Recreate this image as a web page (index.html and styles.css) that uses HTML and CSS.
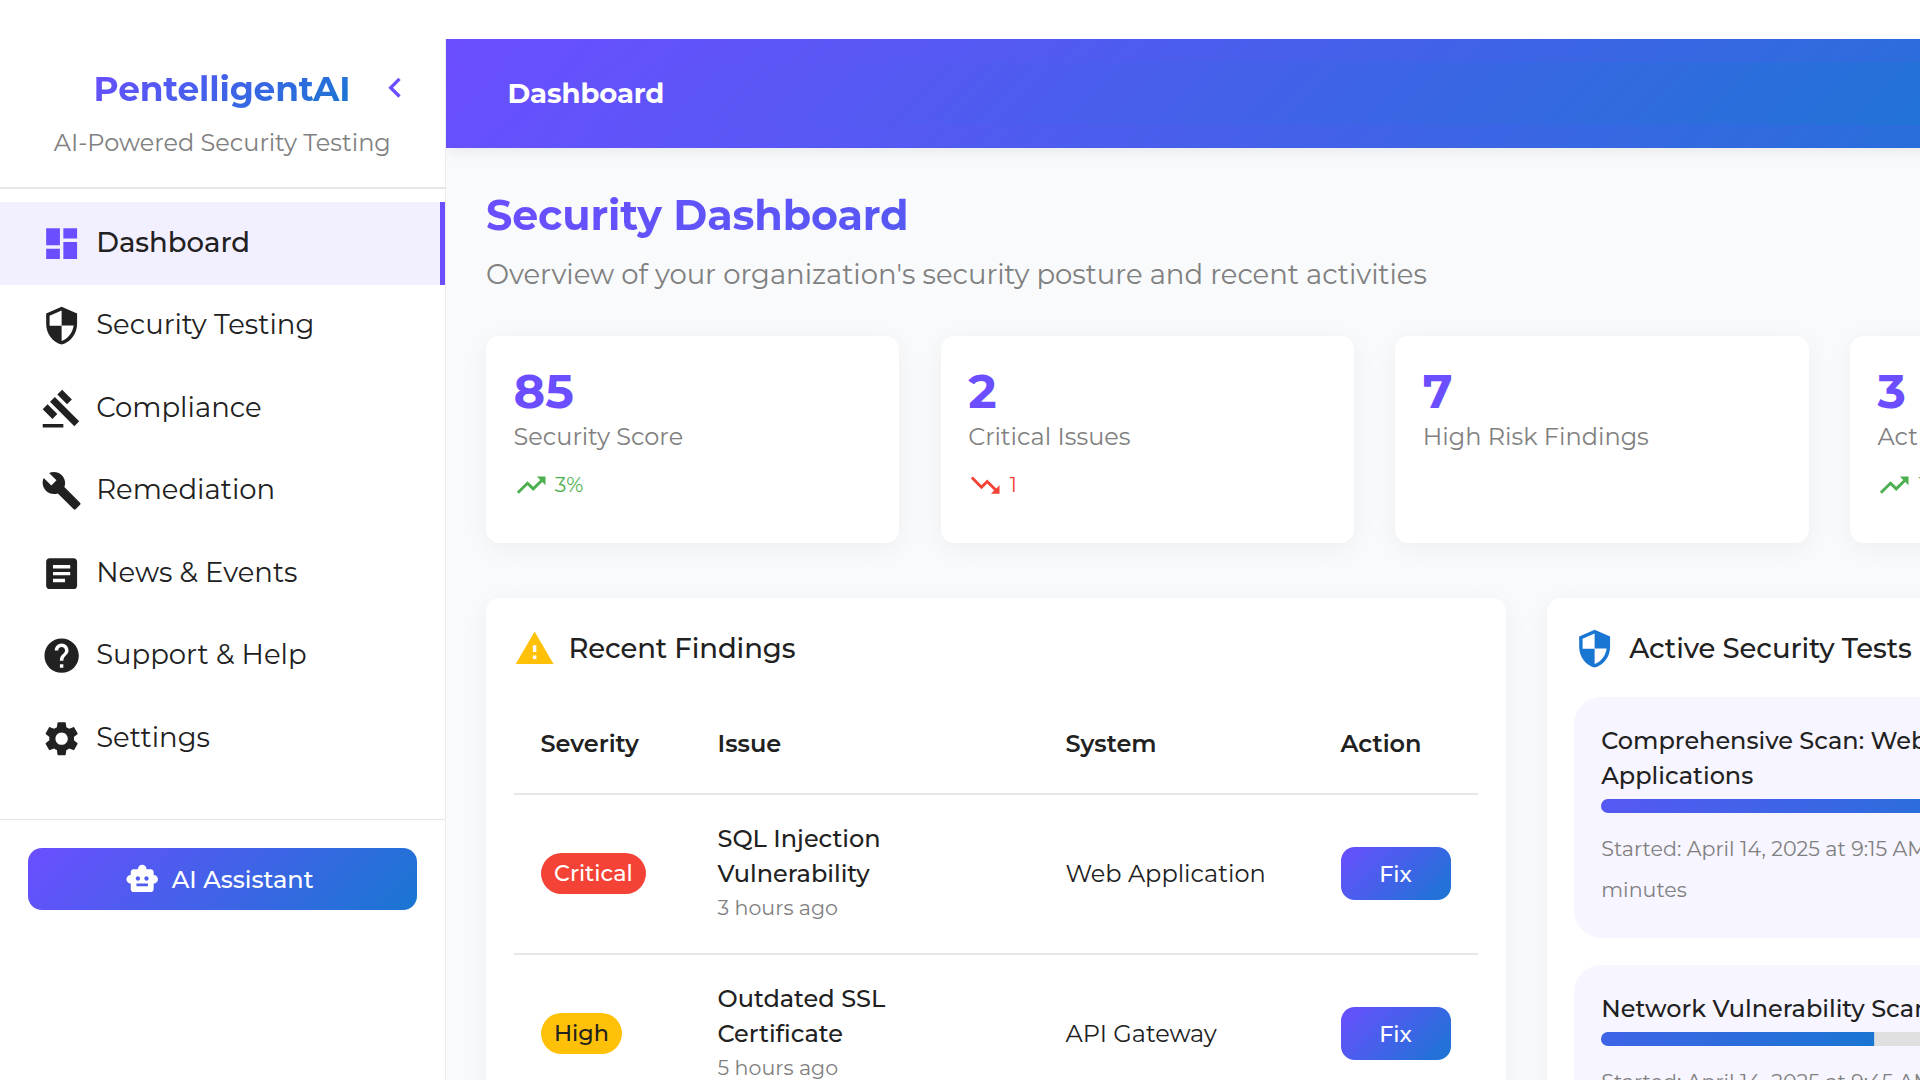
FILE: index.html
```html
<!DOCTYPE html>
<html lang="en">
<head>
<meta charset="utf-8">
<title>PentelligentAI - Security Dashboard</title>
<link rel="stylesheet" href="styles.css">
</head>
<body>
<svg class="sprite" aria-hidden="true">
  <symbol id="i-dashboard" viewBox="0 0 24 24"><path d="M3 13h8V3H3v10zm0 8h8v-6H3v6zm10 0h8V11h-8v10zm0-18v6h8V3h-8z"/></symbol>
  <symbol id="i-shield" viewBox="0 0 24 24"><path d="M12 1 3 5v6c0 5.55 3.84 10.74 9 12 5.16-1.26 9-6.45 9-12V5l-9-4zm0 10.99h7c-.53 4.12-3.28 7.79-7 8.94V12H5V6.3l7-3.11v8.8z"/></symbol>
  <symbol id="i-gavel" viewBox="0 0 24 24"><path d="M1 21h12v2H1v-2zM5.245 8.07l2.83-2.827 14.14 14.142-2.828 2.828L5.245 8.07zM12.317 1l5.657 5.656-2.83 2.83-5.654-5.66L12.317 1zM3.825 9.485l5.657 5.657-2.828 2.828-5.657-5.657 2.828-2.828z"/></symbol>
  <symbol id="i-build" viewBox="0 0 24 24"><path d="m22.7 19-9.1-9.1c.9-2.3.4-5-1.5-6.900-2-2-5-2.400-7.400-1.300L9 6 6 9 1.600 4.700C.4 7.100.9 10.100 2.900 12.100c1.900 1.900 4.600 2.400 6.900 1.500l9.100 9.100c.4.4 1 .4 1.400 0l2.300-2.300c.5-.4.5-1.100.1-1.400z"/></symbol>
  <symbol id="i-article" viewBox="0 0 24 24"><path d="M19 3H5c-1.100 0-2 .9-2 2v14c0 1.100.9 2 2 2h14c1.100 0 2-.9 2-2V5c0-1.100-.9-2-2-2zm-5 14H7v-2h7v2zm3-4H7v-2h10v2zm0-4H7V7h10v2z"/></symbol>
  <symbol id="i-help" viewBox="0 0 24 24"><path d="M12 2C6.480 2 2 6.480 2 12s4.480 10 10 10 10-4.480 10-10S17.520 2 12 2zm1 17h-2v-2h2v2zm2.070-7.750-.9.920C13.450 12.900 13 13.500 13 15h-2v-.5c0-1.100.450-2.100 1.170-2.830l1.240-1.260c.370-.360.590-.860.590-1.410 0-1.100-.9-2-2-2s-2 .9-2 2H8c0-2.210 1.790-4 4-4s4 1.790 4 4c0 .880-.360 1.680-.930 2.250z"/></symbol>
  <symbol id="i-settings" viewBox="0 0 24 24"><path d="M19.140 12.940c.040-.3.060-.610.060-.940 0-.320-.020-.640-.070-.940l2.030-1.580c.180-.140.230-.410.120-.610l-1.920-3.320c-.120-.220-.370-.290-.590-.220l-2.390.960c-.5-.380-1.030-.7-1.620-.940l-.360-2.540c-.040-.240-.240-.410-.480-.410h-3.840c-.240 0-.430.170-.470.410l-.360 2.540c-.590.240-1.130.570-1.620.940l-2.390-.960c-.220-.080-.470 0-.590.220L2.740 8.870c-.120.210-.080.470.120.610l2.030 1.580c-.050.3-.090.630-.090.940s.020.640.070.940l-2.030 1.580c-.180.140-.230.410-.120.610l1.920 3.320c.120.220.370.290.590.220l2.390-.960c.5.380 1.030.7 1.620.940l.360 2.540c.050.240.240.410.480.410h3.840c.240 0 .440-.170.470-.410l.360-2.540c.590-.240 1.130-.560 1.620-.940l2.390.960c.220.080.470 0 .590-.220l1.920-3.320c.120-.220.070-.470-.120-.610l-2.010-1.580zM12 15.600c-1.980 0-3.600-1.620-3.600-3.600s1.620-3.600 3.600-3.600 3.600 1.620 3.600 3.600-1.620 3.600-3.600 3.600z"/></symbol>
  <symbol id="i-bot" viewBox="0 0 24 24"><path d="M20 9V7c0-1.100-.9-2-2-2h-3c0-1.660-1.340-3-3-3S9 3.340 9 5H6c-1.100 0-2 .9-2 2v2c-1.660 0-3 1.340-3 3s1.340 3 3 3v4c0 1.100.9 2 2 2h12c1.100 0 2-.9 2-2v-4c1.660 0 3-1.340 3-3s-1.340-3-3-3zM7.500 11.500c0-.830.670-1.500 1.500-1.500s1.500.670 1.500 1.500S9.830 13 9 13s-1.500-.670-1.500-1.500zM16 17H8v-2h8v2zm-1-4c-.830 0-1.500-.670-1.500-1.500S14.170 10 15 10s1.500.670 1.500 1.500S15.830 13 15 13z"/></symbol>
  <symbol id="i-chevron" viewBox="0 0 24 24"><path d="M15.410 7.410 14 6l-6 6 6 6 1.410-1.410L10.830 12z"/></symbol>
  <symbol id="i-up" viewBox="0 0 24 24"><path d="m16 6 2.290 2.290-4.880 4.880-4-4L2 16.590 3.410 18l6-6 4 4 6.300-6.290L22 12V6z"/></symbol>
  <symbol id="i-down" viewBox="0 0 24 24"><path d="m16 18 2.290-2.290-4.880-4.880-4 4L2 7.410 3.410 6l6 6 4-4 6.300 6.290L22 12v6z"/></symbol>
  <symbol id="i-warning" viewBox="0 0 24 24"><path d="M1 21h22L12 2 1 21zm12-3h-2v-2h2v2zm0-4h-2v-4h2v4z"/></symbol>
</svg>

<div class="app">
  <aside class="sidebar">
    <div class="brand">
      <div class="brand-row">
        <div class="logo">PentelligentAI</div>
        <svg class="icon collapse"><use href="#i-chevron"/></svg>
      </div>
      <div class="tagline">AI-Powered Security Testing</div>
    </div>
    <nav class="nav">
      <a class="nav-item active"><svg class="icon"><use href="#i-dashboard"/></svg>Dashboard</a>
      <a class="nav-item"><svg class="icon"><use href="#i-shield"/></svg>Security Testing</a>
      <a class="nav-item"><svg class="icon"><use href="#i-gavel"/></svg>Compliance</a>
      <a class="nav-item"><svg class="icon"><use href="#i-build"/></svg>Remediation</a>
      <a class="nav-item"><svg class="icon"><use href="#i-article"/></svg>News &amp; Events</a>
      <a class="nav-item"><svg class="icon"><use href="#i-help"/></svg>Support &amp; Help</a>
      <a class="nav-item"><svg class="icon"><use href="#i-settings"/></svg>Settings</a>
    </nav>
    <div class="assistant">
      <button class="assistant-btn"><svg class="icon small"><use href="#i-bot"/></svg>AI Assistant</button>
    </div>
  </aside>

  <div class="viewport">
    <div class="main">
      <header class="topbar"><div class="toolbar">Dashboard</div></header>
      <main class="content">
        <h1 class="title">Security Dashboard</h1>
        <p class="subtitle">Overview of your organization's security posture and recent activities</p>

        <section class="stats">
          <div class="card stat">
            <div class="value">85</div>
            <div class="label">Security Score</div>
            <div class="trend good"><svg class="icon small"><use href="#i-up"/></svg>3%</div>
          </div>
          <div class="card stat">
            <div class="value">2</div>
            <div class="label">Critical Issues</div>
            <div class="trend bad"><svg class="icon small"><use href="#i-down"/></svg>1</div>
          </div>
          <div class="card stat">
            <div class="value">7</div>
            <div class="label">High Risk Findings</div>
          </div>
          <div class="card stat">
            <div class="value">3</div>
            <div class="label">Active Tests</div>
            <div class="trend good"><svg class="icon small"><use href="#i-up"/></svg>1</div>
          </div>
        </section>

        <section class="panels">
          <div class="card panel">
            <h2 class="panel-title"><svg class="icon warn"><use href="#i-warning"/></svg>Recent Findings</h2>
            <table class="findings">
              <thead>
                <tr><th class="c-sev">Severity</th><th class="c-issue">Issue</th><th class="c-sys">System</th><th>Action</th></tr>
              </thead>
              <tbody>
                <tr>
                  <td><span class="badge critical">Critical</span></td>
                  <td><div class="issue">SQL Injection<br>Vulnerability</div><div class="when">3 hours ago</div></td>
                  <td>Web Application</td>
                  <td><button class="fix">Fix</button></td>
                </tr>
                <tr>
                  <td><span class="badge high">High</span></td>
                  <td><div class="issue">Outdated SSL<br>Certificate</div><div class="when">5 hours ago</div></td>
                  <td>API Gateway</td>
                  <td><button class="fix">Fix</button></td>
                </tr>
              </tbody>
            </table>
          </div>

          <div class="card panel">
            <h2 class="panel-title tests-title"><svg class="icon info"><use href="#i-shield"/></svg>Active Security Tests</h2>
            <div class="test">
              <div class="test-name">Comprehensive Scan: Web<br>Applications</div>
              <div class="bar"><div class="fill" style="transform: translateX(-25%)"></div></div>
              <div class="meta">Started: April 14, 2025 at 9:15 AM<br>minutes</div>
            </div>
            <div class="test">
              <div class="test-name">Network Vulnerability Scan</div>
              <div class="bar"><div class="fill" style="transform: translateX(-55%)"></div></div>
              <div class="meta">Started: April 14, 2025 at 9:45 AM</div>
            </div>
          </div>
        </section>
      </main>
    </div>
  </div>
</div>
</body>
</html>
```
FILE: styles.css
```css
:root {
  --primary: #6b4eff;
  --blue: #1976d2;
  --gradient: linear-gradient(135deg, var(--primary) 0%, var(--blue) 100%);
  --text: #212121;
  --muted: #808080;
  --line: #e6e6e6;
}

* { box-sizing: border-box; }

body {
  margin: 0;
  height: 1080px;
  overflow: hidden;
  background: #fff;
  color: var(--text);
  font-family: Montserrat, Inter, sans-serif;
  font-size: 27.5px;
}

h1, h2, p { margin: 0; }
button { border: 0; font-family: inherit; color: #fff; background: var(--gradient); }

.sprite { display: none; }
.icon { width: 41.25px; height: 41.25px; fill: currentColor; flex: none; }
.icon.small { width: 34.4px; height: 34.4px; }

.app { display: flex; height: 1080px; padding-top: 39px; }

/* Sidebar */
.sidebar { width: 445.5px; flex: none; border-right: 1.5px solid #ebecee; }
.brand { height: 150px; padding-top: 27px; border-bottom: 2px solid var(--line); }
.brand-row { display: flex; align-items: center; height: 44px; padding-left: 93.5px; }
.logo {
  padding-top: 2px;
  font-size: 34.4px;
  line-height: 44px;
  font-weight: 700;
  background: var(--gradient);
  -webkit-background-clip: text;
  background-clip: text;
  color: transparent;
  letter-spacing: -0.15px;
}
.collapse { color: var(--primary); margin-left: 25px; width: 40px; }
.tagline { margin-top: 16px; font-size: 24px; line-height: 34px; text-align: center; color: var(--muted); }

.nav { padding-top: 13px; height: 631px; border-bottom: 1.5px solid var(--line); }
.nav-item { display: flex; align-items: center; gap: 13.7px; height: 82.5px; padding: 0 0 3px 41.25px; }
.nav-item .icon { margin-top: 3px; }
.nav-item.active { background: #f2efff; border-right: 5px solid var(--primary); font-weight: 500; }
.nav-item.active .icon { color: var(--primary); }

.assistant { padding: 28px; }
.assistant-btn {
  display: flex;
  align-items: center;
  justify-content: center;
  gap: 12.5px;
  width: 100%;
  height: 62px;
  padding: 0 6px 0 0;
  border-radius: 14px;
  font-size: 24px;
  font-weight: 500;
}

/* Main column, wider than the window */
.viewport { flex: 1; min-width: 0; overflow: hidden; background: #f9fafc; }
.main { width: 1860px; }
.topbar { padding: 23px 0; background: var(--gradient); box-shadow: 0 3px 14px rgba(0, 0, 0, .08); }
.toolbar {
  width: 1640px;
  height: 63px;
  padding-left: 62px;
  color: #fff;
  font-weight: 700;
  line-height: 63px;
  letter-spacing: -0.1px;
  background: var(--gradient);
}

.content { padding: 42px 41px 41px 40.5px; }
.title {
  font-size: 41.25px;
  line-height: 50px;
  font-weight: 700;
  background: var(--gradient);
  -webkit-background-clip: text;
  background-clip: text;
  color: transparent;
  letter-spacing: -0.13px;
}
.subtitle { margin-top: 12px; line-height: 44px; color: var(--muted); letter-spacing: -0.035px; }

.card { background: #fff; border-radius: 13.75px; box-shadow: 0 5px 27px rgba(0, 0, 0, .05); }

.stats { display: grid; grid-template-columns: repeat(4, 413.4px); gap: 41.25px; margin-top: 40px; }
.stat { height: 207px; padding: 26px 27.5px; }
.value { font-size: 48px; line-height: 58px; font-weight: 700; color: var(--primary); }
.label { font-size: 24px; line-height: 34px; color: var(--muted); }
.trend { display: flex; align-items: center; gap: 6.9px; margin-top: 13.5px; font-size: 20.6px; }
.good { color: #4caf50; }
.bad { color: #f44336; }

.panels { display: grid; grid-template-columns: 1019.5px 716px; gap: 41.25px; margin-top: 55px; }
.panel { height: 560px; padding: 27.5px; }
.panel-title { display: flex; align-items: center; gap: 13.7px; height: 47px; padding-bottom: 3px; font-size: 27.5px; font-weight: 500; letter-spacing: -0.1px; }
.panel-title .icon { margin-top: 2.5px; }
.warn { color: #ffc107; }
.info { color: var(--blue); }

.findings { width: 964.5px; margin-top: 21px; border-collapse: collapse; table-layout: fixed; font-size: 24px; }
.findings th { height: 100px; padding: 1px 27px 0; text-align: left; font-weight: 600; border-bottom: 2px solid var(--line); }
.findings td { height: 160px; padding: 0 27px; border-bottom: 2px solid var(--line); }
.c-sev { width: 177px; }
.c-issue { width: 348px; }
.c-sys { width: 275px; }
.issue { font-weight: 500; line-height: 35px; }
.when { padding-bottom: 1px; font-size: 20.6px; line-height: 34px; color: var(--muted); }
.badge { display: inline-block; padding: 0 13.5px; border-radius: 21px; font-size: 22.3px; line-height: 41.25px; font-weight: 500; }
.critical { background: #f44336; color: #fff; }
.high { background: #ffc107; }
.fix { width: 110px; height: 53px; padding: 0; border-radius: 13.75px; font-size: 22.3px; font-weight: 500; }

.tests-title { margin-bottom: 24.5px; }
.test { margin-bottom: 27px; padding: 26px 27px 27px; border-radius: 27.5px; background: #f7f5ff; }
.test-name { font-size: 24px; line-height: 35px; font-weight: 500; }
.bar { height: 14px; margin-top: 6px; border-radius: 7px; background: #e0e0e0; overflow: hidden; }
.fill { height: 100%; background: var(--gradient); }
.meta { margin-top: 15px; font-size: 20.6px; line-height: 41.25px; color: var(--muted); white-space: nowrap; }
```
